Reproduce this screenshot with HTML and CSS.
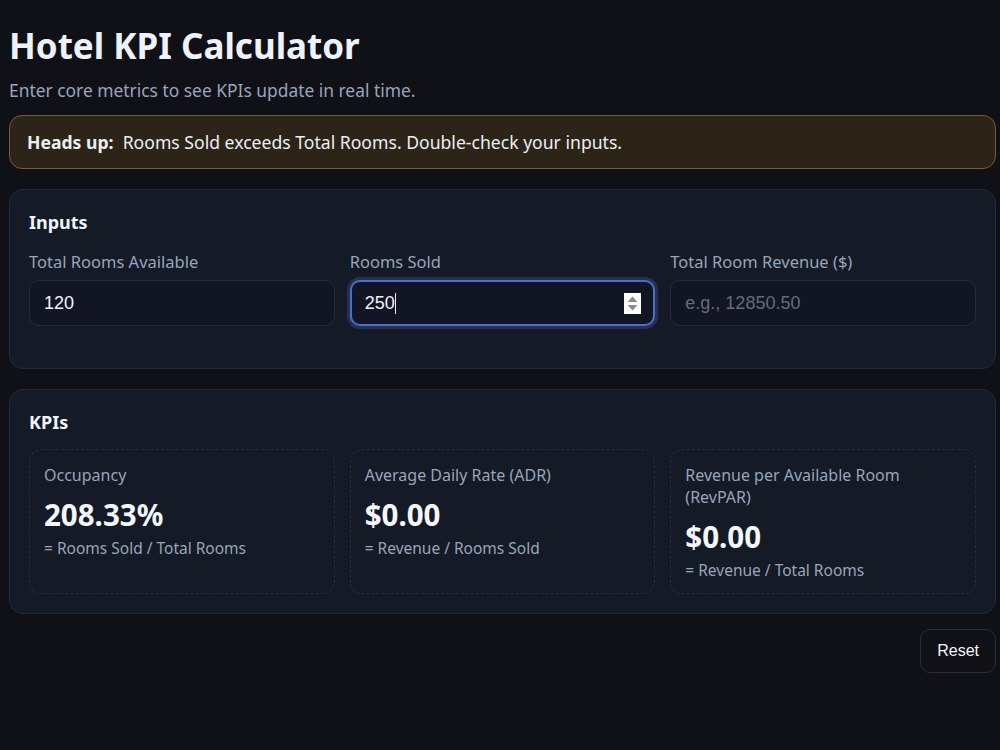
FILE: index.html
```html
<!DOCTYPE html>
<html lang="en">
<head>
  <meta charset="UTF-8">
  <meta name="viewport" content="width=device-width, initial-scale=1.0">
  <link rel="stylesheet" href="styles.css">
  <title>Hotel KPI Calculator</title>
</head>
<body>

<div class="page">
  <h1 class="page-title">Hotel KPI Calculator</h1>
  <p class="page-sub">Enter core metrics to see KPIs update in real time.</p>

  <div class="alert">
    <b>Heads up:</b>&nbsp; Rooms Sold exceeds Total Rooms. Double-check your inputs.
  </div>

  <div class="card">
    <h2 class="card-title">Inputs</h2>
    <div class="field-row">
      <label class="field">
        <span class="field-label">Total Rooms Available</span>
        <input class="field-input" type="text" value="120">
      </label>
      <label class="field">
        <span class="field-label">Rooms Sold</span>
        <span class="input-wrap">
          <input class="field-input field-focus" type="text" value="250"><span class="caret"></span>
          <span class="spinner">
            <svg width="17" height="21" viewBox="0 0 17 21"><rect width="17" height="21" fill="#fff"/><path d="M3.5 9 L8.5 3.5 L13.5 9 Z" fill="#8c8c8c"/><path d="M3.5 12 L8.5 17.5 L13.5 12 Z" fill="#8c8c8c"/></svg>
          </span>
        </span>
      </label>
      <label class="field">
        <span class="field-label">Total Room Revenue ($)</span>
        <input class="field-input" type="text" placeholder="e.g., 12850.50">
      </label>
    </div>
  </div>

  <div class="card">
    <h2 class="card-title">KPIs</h2>
    <div class="kpi-row">
      <div class="kpi">
        <div class="kpi-label">Occupancy</div>
        <div class="kpi-value">208.33%</div>
        <div class="kpi-formula">= Rooms Sold / Total Rooms</div>
      </div>
      <div class="kpi">
        <div class="kpi-label">Average Daily Rate (ADR)</div>
        <div class="kpi-value">$0.00</div>
        <div class="kpi-formula">= Revenue / Rooms Sold</div>
      </div>
      <div class="kpi">
        <div class="kpi-label">Revenue per Available Room (RevPAR)</div>
        <div class="kpi-value">$0.00</div>
        <div class="kpi-formula">= Revenue / Total Rooms</div>
      </div>
    </div>
  </div>

  <div class="actions">
    <button class="btn">Reset</button>
  </div>
</div>

</body>
</html>
```

FILE: styles.css
```css
body {
  margin: 0;
  background-color: #101117;
  color: #e6ebf5;
  font-family: "Noto Sans", "Open Sans", sans-serif;
}

.page {
  padding: 0 4px 0 9px;
}

.page-title {
  font-size: 35px;
  font-weight: 700;
  margin: 0;
  padding-top: 24px;
  line-height: 44px;
  color: #eef2fb;
}

.page-sub {
  margin: 10px 0 13px 0;
  font-size: 17.4px;
  line-height: 24px;
  color: #98a5bb;
}

.alert {
  background-color: #2c2417;
  border: 1px solid #7a5a33;
  border-radius: 13px;
  padding: 0 17px;
  height: 52px;
  display: flex;
  align-items: center;
  font-size: 17.6px;
  color: #eceff5;
  margin-bottom: 20px;
}

.card {
  background-color: #151a27;
  border: 1px solid #222a3a;
  border-radius: 14px;
  padding: 19px;
  margin-bottom: 20px;
}

.card-title {
  font-size: 18px;
  line-height: 26px;
  font-weight: 700;
  margin: 0 0 14px 0;
  color: #f1f4fa;
}

.field-row {
  display: grid;
  grid-template-columns: 1fr 1fr 1fr;
  gap: 15px;
  padding-top: 2px;
  padding-bottom: 23px;
}

.field {
  display: flex;
  flex-direction: column;
}

.field-label {
  font-size: 16.5px;
  line-height: 22px;
  color: #98a5bb;
  margin-bottom: 7px;
}

.input-wrap {
  position: relative;
  display: flex;
  align-items: center;
}

.field-input {
  box-sizing: border-box;
  width: 100%;
  height: 46px;
  background-color: #121624;
  border: 1px solid #232b3c;
  border-radius: 10px;
  padding: 0 14px;
  font-family: "Liberation Sans", Arial, sans-serif;
  font-size: 18px;
  color: #eef2fb;
  outline: none;
}

.field-input::placeholder {
  color: #646b78;
}

.field-focus {
  border: 2px solid #4c6fc4;
  box-shadow: 0 0 0 3px rgba(76, 111, 196, 0.28);
  padding: 0 13px;
}

.caret {
  position: absolute;
  left: 45px;
  top: 13px;
  width: 1px;
  height: 21px;
  background-color: #e6ebf5;
}

.spinner {
  position: absolute;
  right: 14px;
  top: 13px;
  display: flex;
}

.kpi-row {
  display: grid;
  grid-template-columns: 1fr 1fr 1fr;
  gap: 15px;
}

.kpi {
  border: 1px dashed #252d3d;
  border-radius: 12px;
  padding: 14px 14px 12px 14px;
}

.kpi-label {
  font-size: 16px;
  color: #98a5bb;
  line-height: 22px;
}

.kpi-value {
  font-size: 29.5px;
  line-height: 40px;
  font-weight: 700;
  color: #f4f7fc;
  margin: 9px 0 2px 0;
}

.kpi-formula {
  font-size: 15.5px;
  line-height: 22px;
  color: #98a5bb;
}

.actions {
  display: flex;
  justify-content: flex-end;
  margin-top: -5px;
}

.btn {
  background-color: #101117;
  border: 1px solid #262d3b;
  border-radius: 10px;
  color: #f2f4f8;
  font-family: "Liberation Sans", Arial, sans-serif;
  font-size: 16px;
  padding: 0 16px;
  height: 44px;
}
```
